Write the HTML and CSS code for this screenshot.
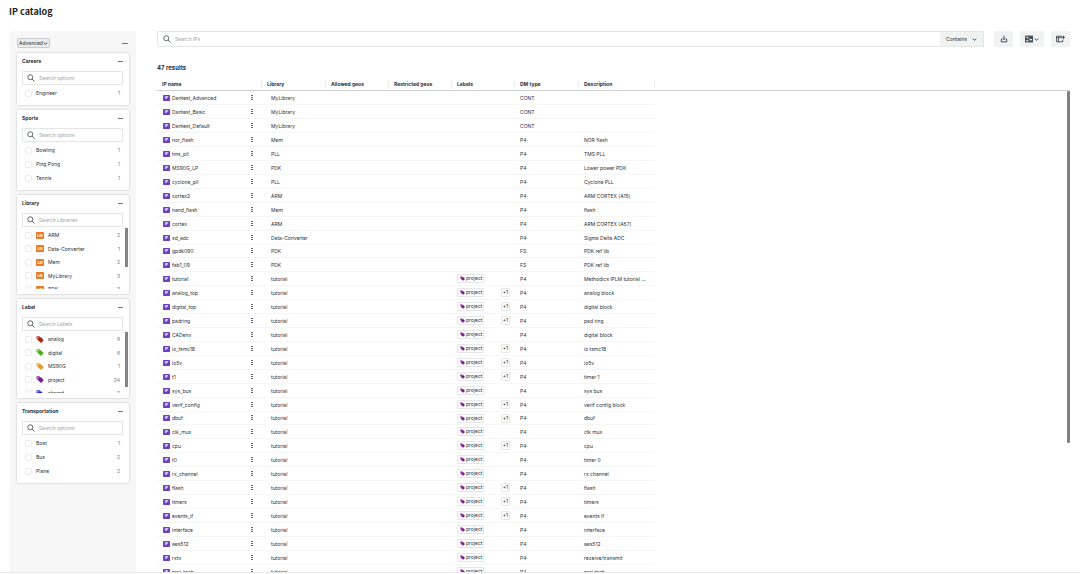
FILE: index.html
```html
<!DOCTYPE html>
<html lang="en">
<head>
    <meta charset="UTF-8">
    <meta name="viewport" content="width=device-width, initial-scale=1.0">
    <title>IP catalog</title>

    <link rel="stylesheet" href="styles.css">
</head>
<body>
    <svg class="sprite" aria-hidden="true">
        <symbol id="icon-search" viewBox="0 0 16 16">
            <circle cx="6.5" cy="6.5" r="5" fill="none" stroke="currentColor" stroke-width="1.7"/>
            <path d="M10.2 10.2 15 15" stroke="currentColor" stroke-width="1.9"/>
        </symbol>
        <symbol id="icon-chevron" viewBox="0 0 10 10">
            <path d="M1.5 3 5 6.8 8.5 3" fill="none" stroke="currentColor" stroke-width="1.7"/>
        </symbol>
        <symbol id="icon-tags" viewBox="0 0 15 14">
            <path d="M0 1.500 1.500 0H6l5 5-5 5.500L0 5.500z" fill="currentColor" opacity="0.7"/>
            <path d="M4 4.500 5.500 3H10l5 5.500L9.500 14 4 9z" fill="currentColor"/>
            <circle cx="2.800" cy="2.800" r="0.900" fill="#fff"/>
        </symbol>
        <symbol id="icon-ip" viewBox="0 0 14 12">
            <rect width="14" height="12" rx="1.500" fill="#6b3fc0"/>
            <text x="7" y="8.500" class="icon-text">IP</text>
        </symbol>
        <symbol id="icon-lib" viewBox="0 0 16 14">
            <rect width="16" height="14" rx="2" fill="#ee7723"/>
            <text x="8" y="9" class="icon-text">LIB</text>
        </symbol>
    </svg>

    <header class="page-header">
        <h1>IP catalog</h1>
    </header>

    <main class="page">
        <aside class="filters">
            <div class="filters-top">
                <label class="mode">
                    <select class="mode-select" aria-label="Filter mode">
                        <option>Advanced</option>
                    </select>
                    <svg class="chevron"><use href="#icon-chevron"/></svg>
                </label>
                <button type="button" class="collapse collapse-all" aria-label="Collapse all"></button>
            </div>
            <div id="filter-cards" class="filter-cards"></div>
        </aside>

        <section class="catalog">
            <div class="toolbar">
                <div class="search">
                    <svg class="search-icon"><use href="#icon-search"/></svg>
                    <input type="text" class="search-input" placeholder="Search IPs" aria-label="Search IPs">
                    <label class="match">
                        <select class="match-select" aria-label="Match type">
                            <option>Contains</option>
                        </select>
                        <svg class="chevron"><use href="#icon-chevron"/></svg>
                    </label>
                </div>
                <button type="button" class="tool" aria-label="Download">
                    <svg class="tool-icon" viewBox="0 0 14 14">
                        <path d="M7 1v7M4.500 5.500 7 8l2.500-2.500M4 7H2.500L2 12h10l-.500-5H10" fill="none" stroke="currentColor" stroke-width="1.400"/>
                    </svg>
                </button>
                <button type="button" class="tool tool-wide" aria-label="View">
                    <svg class="tool-icon" viewBox="0 0 14 14">
                        <rect y="1" width="14" height="12" fill="#46505c"/>
                        <path d="M2 3h3v2H2zM2 9h4v2H2zM9 7h3v2H9zM8 3h1v1H8z" fill="#fff"/>
                        <path d="M4 5l7 4" stroke="#fff"/>
                    </svg>
                    <svg class="chevron"><use href="#icon-chevron"/></svg>
                </button>
                <button type="button" class="tool" aria-label="Edit columns">
                    <svg class="tool-icon tool-icon-wide" viewBox="0 0 16 14">
                        <path d="M10.500 2H1v10h11V8M1 4.500h9M4.500 4.500V12" fill="none" stroke="currentColor" stroke-width="1.400"/>
                        <path d="M13 1v6M10 4h6" stroke="currentColor" stroke-width="1.500"/>
                    </svg>
                </button>
            </div>

            <h2 class="results">47 results</h2>

            <div class="table-wrap">
                <table class="ip-table">
                    <thead>
                        <tr>
                            <th class="col-name">IP name</th>
                            <th class="col-library">Library</th>
                            <th class="col-geo">Allowed geos</th>
                            <th class="col-geo">Restricted geos</th>
                            <th class="col-labels">Labels</th>
                            <th class="col-dm">DM type</th>
                            <th class="col-description">Description</th>
                        </tr>
                    </thead>
                    <tbody id="ip-rows"></tbody>
                </table>
                <div class="scroll-thumb"></div>
            </div>
        </section>
    </main>

    <script>
        const filters = [
            { title: 'Careers', hint: 'Search options', options: [['Engineer', 1]] },
            { title: 'Sports', hint: 'Search options', options: [['Bowling', 1], ['Ping Pong', 1], ['Tennis', 1]] },
            {
                title: 'Library', hint: 'Search Libraries', scroll: 'short', icon: 'lib',
                options: [['ARM', 2], ['Data-Converter', 1], ['Mem', 2], ['MyLibrary', 3], ['PDK', 3]]
            },
            {
                title: 'Label', hint: 'Search Labels', scroll: 'long', icon: 'tags',
                options: [['analog', 6, 'red'], ['digital', 6, 'green'], ['MS90G', 1, 'amber'], ['project', 34, 'purple'], ['shared', 2, 'blue']]
            },
            { title: 'Transportation', hint: 'Search options', options: [['Boat', 1], ['Bus', 2], ['Plane', 2]] }
        ]

        // name, library, dm type, description, has project label, has more labels
        const ips = [
            ['Dantest_Advanced', 'MyLibrary', 'CONT', ''],
            ['Dantest_Basic', 'MyLibrary', 'CONT', ''],
            ['Dantest_Default', 'MyLibrary', 'CONT', ''],
            ['nor_flash', 'Mem', 'P4', 'NOR flash'],
            ['tms_pll', 'PLL', 'P4', 'TMS PLL'],
            ['MS90G_LP', 'PDK', 'P4', 'Lower power PDK'],
            ['cyclone_pll', 'PLL', 'P4', 'Cyclone PLL'],
            ['cortex2', 'ARM', 'P4', 'ARM CORTEX (A15)'],
            ['nand_flash', 'Mem', 'P4', 'flash'],
            ['cortex', 'ARM', 'P4', 'ARM CORTEX (A57)'],
            ['sd_adc', 'Data-Converter', 'P4', 'Sigma Delta ADC'],
            ['gpdk090', 'PDK', 'FS', 'PDK ref lib'],
            ['fab1_09', 'PDK', 'FS', 'PDK ref lib'],
            ['tutorial', 'tutorial', 'P4', 'Methodics IPLM tutorial ...', true],
            ['analog_top', 'tutorial', 'P4', 'analog block', true, true],
            ['digital_top', 'tutorial', 'P4', 'digital block', true, true],
            ['padring', 'tutorial', 'P4', 'pad ring', true, true],
            ['CADenv', 'tutorial', 'P4', 'digital block', true],
            ['io_tsmc18', 'tutorial', 'P4', 'io tsmc18', true, true],
            ['io5v', 'tutorial', 'P4', 'io5v', true, true],
            ['t1', 'tutorial', 'P4', 'timer 1', true, true],
            ['sys_bus', 'tutorial', 'P4', 'sys bus', true],
            ['verif_config', 'tutorial', 'P4', 'verif config block', true, true],
            ['dbuf', 'tutorial', 'P4', 'dbuf', true, true],
            ['clk_mux', 'tutorial', 'P4', 'clk mux', true],
            ['cpu', 'tutorial', 'P4', 'cpu', true, true],
            ['t0', 'tutorial', 'P4', 'timer 0', true],
            ['rx_channel', 'tutorial', 'P4', 'rx channel', true],
            ['flash', 'tutorial', 'P4', 'flash', true, true],
            ['timers', 'tutorial', 'P4', 'timers', true, true],
            ['events_if', 'tutorial', 'P4', 'events if', true, true],
            ['interface', 'tutorial', 'P4', 'interface', true],
            ['aes512', 'tutorial', 'P4', 'aes512', true],
            ['rxtx', 'tutorial', 'P4', 'receive/transmit', true],
            ['proj_tech', 'tutorial', 'P4', 'proj tech', true]
        ]

        const renderOption = (filter, [name, count, color]) => `
            <li>
                <label class="option">
                    <input type="checkbox" class="option-check">
                    ${filter.icon ? `<svg class="option-icon ${color || ''}"><use href="#icon-${filter.icon}"/></svg>` : ''}
                    <span class="option-name">${name}</span>
                    <span class="option-count">${count}</span>
                </label>
            </li>`

        const renderFilter = (filter) => `
            <section class="card">
                <div class="card-head">
                    <h3>${filter.title}</h3>
                    <button type="button" class="collapse" aria-label="Collapse ${filter.title}"></button>
                </div>
                <div class="card-search">
                    <svg class="search-icon"><use href="#icon-search"/></svg>
                    <input type="text" class="search-input" placeholder="${filter.hint}" aria-label="${filter.title} search">
                </div>
                <div class="options-wrap">
                    <ul class="options ${filter.scroll ? 'options-scroll' : ''}">
                        ${filter.options.map((option) => renderOption(filter, option)).join('')}
                    </ul>
                    ${filter.scroll ? `<div class="options-thumb ${filter.scroll}"></div>` : ''}
                </div>
            </section>`

        const renderIp = ([name, library, dm, description, project, more]) => `
            <tr>
                <td>
                    <div class="name-cell">
                        <svg class="ip-icon"><use href="#icon-ip"/></svg>
                        <span>${name}</span>
                        <button type="button" class="row-menu" aria-label="Actions for ${name}">
                            <svg class="dots" viewBox="0 0 2 6"><path d="M0 0h2v1H0zM0 2h2v1H0zM0 4h2v1H0z" fill="#5c646e"/></svg>
                        </button>
                    </div>
                </td>
                <td class="library-cell">${library}</td>
                <td></td>
                <td></td>
                <td>
                    <div class="labels-cell">
                        ${project ? '<span class="chip"><svg class="chip-icon purple"><use href="#icon-tags"/></svg>project</span>' : ''}
                        ${more ? '<span class="chip chip-more">+1</span>' : ''}
                    </div>
                </td>
                <td>${dm}</td>
                <td>${description}</td>
            </tr>`

        document.querySelector('#filter-cards').innerHTML = filters.map(renderFilter).join('')
        document.querySelector('#ip-rows').innerHTML = ips.map(renderIp).join('')
    </script>
</body>
</html>
```

FILE: styles.css
```css
* {
    box-sizing: border-box;
}

body {
    font-family: Inter, "Noto Sans", sans-serif;
    font-size: 5px;
    line-height: 8px;
    color: #28303b;

    background-color: #fff;

    height: 100vh;
    margin: 0;
    overflow: hidden;

    display: flex;
    flex-direction: column;
}

h1, h2, h3, ul {
    margin: 0;
    padding: 0;
}

button, input, select {
    font: inherit;
    color: inherit;

    margin: 0;
    padding: 0;

    border: none;
    background-color: transparent;
}

select {
    appearance: none;
}

.sprite {
    display: none;
}

.icon-text {
    font-family: "Liberation Sans", sans-serif;
    font-size: 7px;
    font-weight: 700;
    text-anchor: middle;
    fill: #fff;
}

.page-header {
    flex: none;
    height: 31px;
    padding: 4px 9px;
}

.page-header h1 {
    font-family: "Noto Sans CJK SC", "Noto Sans", sans-serif;
    font-size: 9px;
    line-height: 16px;
    color: #1a1f26;
}

.page {
    flex: 1;
    min-height: 0;
    padding: 0 10px;
    margin-bottom: 1px;
    border-bottom: 1px solid #e8e8e8;

    display: flex;
    gap: 21px;
}

/* filters */

.filters {
    flex: none;
    width: 126px;
    padding: 7px;

    background-color: #f7f7f7;
    border-radius: 2px;
}

.filters-top {
    margin-bottom: 5px;

    display: flex;
    justify-content: space-between;
    align-items: center;
}

.mode {
    height: 10px;
    padding: 0 1px;

    background-color: #ececec;
    border: 1px solid #c9cdd0;
    border-radius: 2px;

    display: flex;
    align-items: center;
}

.chevron {
    flex: none;
    width: 5px;
    height: 5px;
}

.collapse {
    width: 5px;
    height: 1px;
    margin-right: 1px;

    background-color: #6f767e;
}

.collapse-all {
    width: 6px;
}

.filter-cards {
    display: flex;
    flex-direction: column;
    gap: 5px;
}

.card {
    padding: 4px 5px 5px;

    background-color: #fff;
    border-radius: 1px;
    box-shadow: 0 0 2px rgba(0, 0, 0, 0.3);
}

.card-head {
    height: 14px;
    padding-bottom: 6px;

    display: flex;
    justify-content: space-between;
    align-items: center;
}

.card-head h3 {
    font-size: 5px;
    line-height: 8px;
}

.card-search {
    height: 14px;
    margin: 0 1px 1px 0;
    padding: 0 4px;

    border: 1px solid #e4e6e8;
    border-radius: 1px;

    display: flex;
    align-items: center;
    gap: 4px;
}

.search-icon {
    flex: none;
    width: 8px;
    height: 8px;

    color: #46505c;
}

.search-input {
    flex: 1;
    min-width: 0;
    height: 8px;
    outline: none;
}

.search-input::placeholder {
    color: #a0a5ac;
}

.options-wrap {
    position: relative;
}

.options {
    list-style: none;
}

.option {
    height: 14px;
    padding: 0 4px 0 3px;

    display: flex;
    align-items: center;
}

.options-scroll {
    height: 61px;
    overflow: hidden;
}

.options-scroll li:nth-child(even) .option {
    height: 13px;
}

.option-check {
    appearance: none;
    flex: none;
    width: 7px;
    height: 7px;
    margin-right: 4px;

    border: 1px solid #e9ebec;
    border-radius: 2px;
}

.option-icon {
    flex: none;
    width: 8px;
    height: 7px;
    margin-right: 4px;
}

.option-name {
    flex: 1;
}

.option-count {
    color: #777d85;
}

.options-thumb {
    width: 3px;
    background-color: #858585;

    position: absolute;
    top: 0;
    right: -4px;
}

.options-thumb.short {
    height: 64%;
}

.options-thumb.long {
    height: 90%;
}

.red {
    color: #a52a14;
}

.green {
    color: #4caf1e;
}

.amber {
    color: #e59a2c;
}

.purple {
    color: #7a1f8c;
}

.blue {
    color: #2222e8;
}

/* catalog */

.catalog {
    flex: 1;
    min-width: 0;

    display: flex;
    flex-direction: column;
}

.toolbar {
    flex: none;
    height: 16px;

    display: flex;
    gap: 7px;
}

.search {
    flex: 1;
    margin-right: 3px;
    padding-left: 5px;

    border: 1px solid #e4e6e8;
    border-radius: 1px;

    display: flex;
    align-items: center;
    gap: 4px;
}

.match {
    align-self: stretch;
    width: 43px;
    padding: 0 6px;

    background-color: #f1f3f3;

    display: flex;
    justify-content: space-between;
    align-items: center;
}

.tool {
    width: 19px;

    background-color: #f1f3f3;
    border-radius: 1px;

    display: flex;
    justify-content: center;
    align-items: center;
    gap: 1px;
}

.tool-wide {
    width: 24px;
}

.tool-icon {
    width: 8px;
    height: 8px;
}

.tool-icon-wide {
    width: 9px;
}

.results {
    font-size: 6px;
    line-height: 8px;

    margin: 17px 0 4px;
}

.table-wrap {
    flex: 1;
    min-height: 0;
    overflow: hidden;

    position: relative;
}

/* header line runs past the last column */
.table-wrap::before {
    content: "";
    width: 100%;
    height: 1px;

    background-color: #cfd2d4;

    position: absolute;
    top: 14px;
    left: 0;
}

.scroll-thumb {
    width: 3px;
    height: 71%;

    background-color: #808080;
    border-radius: 1px;

    position: absolute;
    top: 15px;
    right: 0;
}

.ip-table {
    table-layout: fixed;
    width: 498px;

    border-collapse: separate;
    border-spacing: 0;
}

.ip-table th {
    height: 15px;
    padding: 0 0 0 5px;

    text-align: left;
    white-space: nowrap;

    background: linear-gradient(#e9ebec, #e9ebec) right center / 1px 7px no-repeat;
}

.ip-table td {
    height: 14px;
    padding: 0 0 0 5px;

    white-space: nowrap;

    border-bottom: 1px solid #f5f6f6;
}

.ip-table tr:nth-child(12n) td {
    height: 13px;
}

.col-name {
    width: 105px;
}

.col-library, .col-dm {
    width: 64px;
}

.col-geo, .col-labels {
    width: 63px;
}

.col-description {
    width: 76px;
}

.ip-table .library-cell {
    padding-left: 9px;
}

.name-cell {
    padding: 0 9px 0 1px;

    display: flex;
    align-items: center;
    gap: 2px;
}

.ip-icon {
    width: 7px;
    height: 6px;
}

.row-menu {
    width: 2px;
    height: 6px;
    margin-left: auto;

    display: flex;
}

.dots {
    width: 2px;
    height: 6px;
}

.labels-cell {
    padding-right: 5px;

    display: flex;
    justify-content: space-between;
}

.chip {
    line-height: 7px;

    height: 9px;
    padding: 0 1px 0 2px;

    border: 1px solid #e4e6e8;
    border-radius: 1px;

    display: flex;
    align-items: center;
    gap: 1px;
}

.chip-more {
    padding: 0 1px;
}

.chip-icon {
    width: 5px;
    height: 5px;
}
```
